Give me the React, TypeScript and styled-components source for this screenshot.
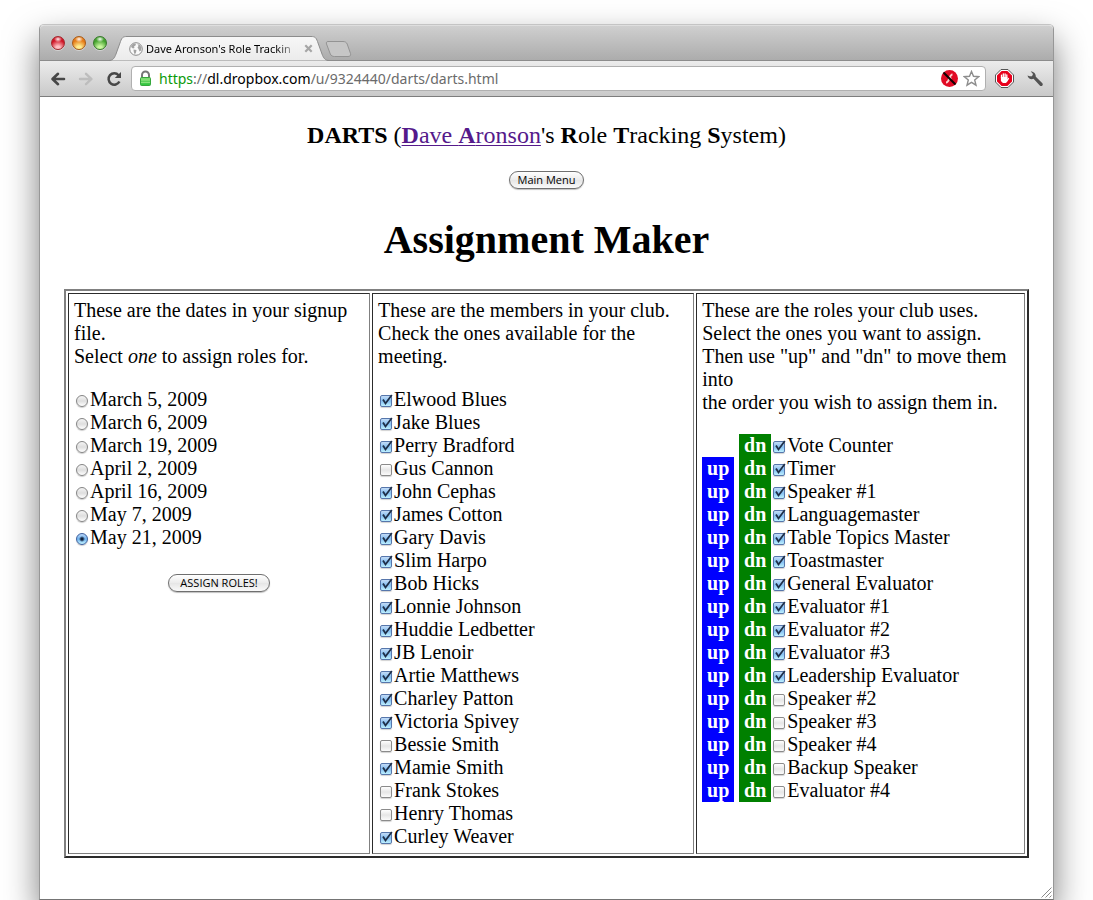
import React, { useState } from "react";
import styled, { createGlobalStyle } from "styled-components";

const GlobalStyle = createGlobalStyle`
  *, *::before, *::after { box-sizing: border-box; }
  body { margin: 0; background: #fff; }
`;

const uiFont = `"Open Sans", "Noto Sans", sans-serif`;
const chromeFont = `"Noto Sans", "Open Sans", sans-serif`;
const serif = `"Liberation Serif", "Times New Roman", serif`;

const Desktop = styled.div`
  min-height: 100vh;
  padding: 24px 39px 0;
  overflow: hidden;
`;

const Window = styled.div`
  display: flex;
  flex-direction: column;
  min-height: calc(100vh - 24px);
  border: 1px solid #979797;
  border-top-color: #c4c4c4;
  border-bottom-color: #747474;
  border-radius: 5px 5px 0 0;
  background: #fff;
  box-shadow: 0 16px 34px rgba(0, 0, 0, 0.52);
`;

const TabStrip = styled.header`
  display: flex;
  align-items: flex-end;
  height: 36px;
  padding-left: 11px;
  border-radius: 4px 4px 0 0;
  border-top: 1px solid #dedede;
  border-bottom: 1px solid #8c8c8c;
  background: linear-gradient(#cfcfcf, #acacac);
`;

const Lights = styled.div`
  display: flex;
  gap: 7px;
  padding-bottom: 10px;
`;

const Light = styled.button<{ $edge: string; $dark: string; $glow: string }>`
  width: 14px;
  height: 14px;
  padding: 0;
  border: 1px solid ${(p) => p.$edge};
  border-radius: 50%;
  background:
    radial-gradient(ellipse 4px 3px at 50% 18%, rgba(255, 255, 255, 0.95), rgba(255, 255, 255, 0)),
    radial-gradient(ellipse 8px 8px at 50% 92%, ${(p) => p.$glow} 25%, ${(p) => p.$dark});
  box-shadow: 0 1px 0 rgba(255, 255, 255, 0.4);
`;

const Tab = styled.div`
  position: relative;
  display: flex;
  align-items: center;
  width: 220px;
  height: 25px;
  margin: 0 -5px -1px 2px;
  padding: 0 16px 0 20px;
`;

const TabShape = styled.svg`
  position: absolute;
  inset: 0;
`;

const TabTitle = styled.span`
  position: relative;
  flex: 1;
  margin-left: 3px;
  white-space: nowrap;
  font: 11px/16px ${chromeFont};
  color: #000;
  mask-image: linear-gradient(90deg, #000 82%, transparent 98%);
`;

const Glyph = styled.svg`
  position: relative;
  display: block;
  flex: none;
`;

const BareButton = styled.button`
  position: relative;
  display: block;
  flex: none;
  padding: 0;
  border: 0;
  background: none;
`;

const Toolbar = styled.nav`
  display: flex;
  align-items: center;
  height: 36px;
  padding: 0 9px 0 10px;
  border-bottom: 1px solid #7d7d7d;
  background: linear-gradient(#ececec, #c9c9c9);
`;

const NavButtons = styled.div`
  display: flex;
  gap: 12px;
  margin-right: 9px;
`;

const AddressBar = styled.div`
  display: flex;
  flex: 1;
  align-items: center;
  height: 25px;
  padding: 0 5px 0 6px;
  border: 1px solid #b0b0b0;
  border-radius: 4px;
  background: #fff;
`;

const Url = styled.div`
  flex: 1;
  margin-left: 6px;
  font: 14px/20px ${chromeFont};
  color: #6b6b6b;
  white-space: nowrap;

  b { font-weight: 400; color: #000; }
  i { font-style: normal; color: #0a9a0a; }
`;

const BarIcons = styled.div`
  display: flex;
  align-items: center;
  gap: 5px;
`;

const ToolIcons = styled.div`
  display: flex;
  align-items: center;
  gap: 12px;
  margin-left: 9px;
`;

const Page = styled.main`
  flex: 1;
  padding: 24px 24px 0;
  font: 20px/23px ${serif};
  color: #000;
`;

const SiteTitle = styled.div`
  font-size: 24px;
  line-height: 28px;
  text-align: center;

  a { color: #551a8b; text-underline-offset: 2px; text-decoration-thickness: 1px; }
`;

const CenterRow = styled.div<{ $top: number }>`
  display: flex;
  justify-content: center;
  padding-top: ${(p) => p.$top}px;
`;

const AquaButton = styled.button<{ $wide?: boolean }>`
  height: 18px;
  padding: 0 ${(p) => (p.$wide ? 11 : 8)}px;
  border: 1px solid #6f6f6f;
  border-radius: 9px;
  background: linear-gradient(#fff, #ececec 48%, #e6e6e6 52%, #fafafa);
  box-shadow: 0 1px 1px rgba(0, 0, 0, 0.25);
  font: 11px/16px ${uiFont};
  color: #000;
  white-space: nowrap;
`;

const Heading = styled.h1`
  margin: 28px 0 26px;
  font-size: 40px;
  line-height: 46px;
  text-align: center;
`;

const Columns = styled.table`
  width: 100%;
  border-spacing: 2px;
  border: 2px solid;
  border-color: #808080 #2c2c2c #2c2c2c #808080;
`;

const Cell = styled.td<{ $width: string }>`
  width: ${(p) => p.$width};
  padding: 5px;
  border: 1px solid;
  border-color: #2c2c2c #808080 #808080 #2c2c2c;
  vertical-align: top;
`;

const Intro = styled.p`
  margin: 0 0 20px;
`;

const List = styled.div`
  display: flex;
  flex-direction: column;
`;

const Row = styled.div`
  display: flex;
  height: 23px;
`;

const Choice = styled.label`
  display: flex;
  align-items: center;
  white-space: nowrap;
`;

const Radio = styled.input`
  appearance: none;
  width: 12px;
  height: 12px;
  margin: 2px 2px 0;
  border: 1px solid #858585;
  border-radius: 50%;
  background: linear-gradient(#f4f4f4, #dedede 50%, #fff);
  box-shadow: 0 1px 1px rgba(0, 0, 0, 0.2);

  &:checked {
    border-color: #3d5f9e;
    background:
      radial-gradient(circle at 50% 50%, #10213c 1px, transparent 3px),
      linear-gradient(#b9d6f8, #6fb2ee 50%, #c4f4ff);
  }
`;

const BoxWrap = styled.span`
  position: relative;
  display: block;
  width: 12px;
  height: 12px;
  margin: 2px 2px 0;
`;

const Box = styled.input`
  appearance: none;
  display: block;
  width: 12px;
  height: 12px;
  margin: 0;
  border: 1px solid #8b8b8b;
  border-radius: 2px;
  background: linear-gradient(#fff, #e6e6e6 50%, #fbfbfb);
  box-shadow: 0 1px 1px rgba(0, 0, 0, 0.18);

  &:checked {
    border-color: #5676ab;
    background: linear-gradient(#c4dcf7, #84bff2 50%, #bdf0ff);
  }
  & + svg { display: none; }
  &:checked + svg { display: block; }
`;

const Tick = styled.svg`
  position: absolute;
  left: 0;
  top: -1px;
  pointer-events: none;
`;

const Mover = styled.button<{ $color: string; $hidden?: boolean }>`
  width: 32px;
  height: 23px;
  margin-right: ${(p) => (p.$color === "blue" ? 5 : 0)}px;
  padding: 0;
  border: 0;
  background: ${(p) => (p.$color === "blue" ? "#00f" : "#008000")};
  visibility: ${(p) => (p.$hidden ? "hidden" : "visible")};
  font: bold 20px/23px ${serif};
  color: #fff;
`;

const GripRow = styled.div`
  display: flex;
  justify-content: flex-end;
  padding: 0 1px 1px 0;
`;

const dates = [
  "March 5, 2009", "March 6, 2009", "March 19, 2009", "April 2, 2009",
  "April 16, 2009", "May 7, 2009", "May 21, 2009",
];

const members: [string, boolean][] = [
  ["Elwood Blues", true], ["Jake Blues", true], ["Perry Bradford", true],
  ["Gus Cannon", false], ["John Cephas", true], ["James Cotton", true],
  ["Gary Davis", true], ["Slim Harpo", true], ["Bob Hicks", true],
  ["Lonnie Johnson", true], ["Huddie Ledbetter", true], ["JB Lenoir", true],
  ["Artie Matthews", true], ["Charley Patton", true], ["Victoria Spivey", true],
  ["Bessie Smith", false], ["Mamie Smith", true], ["Frank Stokes", false],
  ["Henry Thomas", false], ["Curley Weaver", true],
];

const initialRoles: [string, boolean][] = [
  ["Vote Counter", true], ["Timer", true], ["Speaker #1", true],
  ["Languagemaster", true], ["Table Topics Master", true], ["Toastmaster", true],
  ["General Evaluator", true], ["Evaluator #1", true], ["Evaluator #2", true],
  ["Evaluator #3", true], ["Leadership Evaluator", true], ["Speaker #2", false],
  ["Speaker #3", false], ["Speaker #4", false], ["Backup Speaker", false],
  ["Evaluator #4", false],
];

function CheckChoice({ name, checked }: { name: string; checked: boolean }) {
  return (
    <Choice>
      <BoxWrap>
        <Box type="checkbox" defaultChecked={checked} />
        <Tick width="13" height="13" viewBox="0 0 13 13">
          <path d="M3 5.500 5.500 9.500 11.800 1" fill="none" stroke="#1f2f48" strokeWidth="1.800" />
        </Tick>
      </BoxWrap>
      {name}
    </Choice>
  );
}

function BrowserTab() {
  return (
    <Tab>
      <TabShape width="220" height="25" viewBox="0 0 220 25">
        <defs>
          <linearGradient id="tab" x1="0" y1="0" x2="0" y2="1">
            <stop offset="0" stopColor="#f7f7f7" />
            <stop offset="1" stopColor="#ebebeb" />
          </linearGradient>
        </defs>
        <path
          d="M0 24.5C4 24.5 5.500 22 7 18L11.500 5.500C13 1.500 14 .5 18 .5H202C206 .5 207 1.500 208.500 5.500L213 18C214.500 22 216 24.500 220 24.500"
          fill="url(#tab)"
          stroke="#8c8c8c"
        />
      </TabShape>
      <Glyph width="14" height="14" viewBox="0 0 14 14">
        <circle cx="7" cy="7" r="6.300" fill="#fafafa" stroke="#8a8a8a" />
        <path d="M2 4 4.500 1.500 7 1.800 6.500 3.500 5 4.500 5.500 6 4 6.500 2.500 5.500ZM4.500 7.500 7.500 8 7 10.500 5.800 12.500 4.800 10ZM8.500 2 11 3 12.500 5.500 12 8.500 10.500 9.500 9.500 7 8.500 5.500 9.500 4Z" fill="#a3a3a3" />
      </Glyph>
      <TabTitle>Dave Aronson's Role Trackin</TabTitle>
      <BareButton aria-label="Close tab">
        <Glyph width="9" height="9" viewBox="0 0 9 9">
          <path d="M1.300 1.300 7.700 7.700M7.700 1.300 1.300 7.700" stroke="#a6a6a6" strokeWidth="2.200" />
        </Glyph>
      </BareButton>
    </Tab>
  );
}

function BrowserBar() {
  return (
    <Toolbar>
      <NavButtons>
        <BareButton aria-label="Back">
          <Glyph width="16" height="16" viewBox="0 0 16 16">
            <path d="M14 8H3M8 2.800 2.500 8 8 13.200" fill="none" stroke="#474747" strokeWidth="2.600" strokeLinecap="round" strokeLinejoin="round" />
          </Glyph>
        </BareButton>
        <BareButton aria-label="Forward" disabled>
          <Glyph width="16" height="16" viewBox="0 0 16 16">
            <path d="M2 8H13M8 2.800 13.500 8 8 13.200" fill="none" stroke="#bdbdbd" strokeWidth="2.400" strokeLinecap="round" strokeLinejoin="round" />
          </Glyph>
        </BareButton>
        <BareButton aria-label="Reload">
          <Glyph width="16" height="16" viewBox="0 0 16 16">
            <path d="M12.600 4.200A5.700 5.700 0 1 0 13.400 10.500" fill="none" stroke="#474747" strokeWidth="2.500" />
            <path d="M15 1V7H8.800Z" fill="#474747" />
          </Glyph>
        </BareButton>
      </NavButtons>
      <AddressBar>
        <Glyph width="15" height="17" viewBox="0 0 15 17">
          <defs>
            <linearGradient id="lock" x1="0" y1="0" x2="0" y2="1">
              <stop offset="0" stopColor="#88df77" />
              <stop offset="1" stopColor="#28c33a" />
            </linearGradient>
          </defs>
          <path d="M4 8V5a3.500 3.500 0 0 1 7 0V8" fill="none" stroke="#777" strokeWidth="2" />
          <rect x="2.500" y="7.500" width="10" height="8" rx="1" fill="url(#lock)" stroke="#36a73c" />
          <path d="M3 10H12M3 12.500H12" stroke="#a3eb91" strokeWidth=".7" />
        </Glyph>
        <Url><i>https</i>://<b>dl.dropbox.com</b>/u/9324440/darts/darts.html</Url>
        <BarIcons>
          <Glyph width="17" height="17" viewBox="0 0 17 17">
            <circle cx="8.500" cy="8.500" r="8.500" fill="#e10a24" />
            <path d="M11.500 4.500C8 4.500 8.800 12.500 5 12.500M7 8.500H10.500" fill="none" stroke="#ffd0d0" strokeWidth="1.900" />
            <path d="M2.500 2.500 14.500 14.500" stroke="#140000" strokeWidth="2.100" />
          </Glyph>
          <BareButton aria-label="Bookmark this page">
            <Glyph width="17" height="17" viewBox="0 0 17 17">
              <path d="M8.500 1.500 10.500 6.300 15.700 6.700 11.700 10 13 15.200 8.500 12.400 4 15.200 5.300 10 1.300 6.700 6.500 6.300Z" fill="#fff" stroke="#8d8d8d" strokeWidth="1.400" />
            </Glyph>
          </BareButton>
        </BarIcons>
      </AddressBar>
      <ToolIcons>
        <BareButton aria-label="Ad blocker">
          <Glyph width="19" height="19" viewBox="0 0 19 19">
            <path d="M6 .5H13L18.500 6V13L13 18.500H6L.5 13V6Z" fill="#fff" stroke="#555" />
            <path d="M6.600 2H12.400L17 6.600V12.400L12.400 17H6.600L2 12.400V6.600Z" fill="#e8001c" />
            <path d="M6.500 9V6.200M8.300 9V5M10.100 9V4.800M11.800 9V5.800" stroke="#fff" strokeWidth="1.300" strokeLinecap="round" />
            <path d="M5.900 8H12.400V10L13.600 8.800 14.200 9.600 12 13 10.800 14H7.900L5.900 12Z" fill="#fff" />
          </Glyph>
        </BareButton>
        <BareButton aria-label="Settings">
          <Glyph width="18" height="18" viewBox="0 0 18 18">
            <path d="M1.500 5.500C2 8.500 5 9.800 7.500 8.800L13.800 15.600C15.300 17.100 17.800 14.900 16.400 13.200L9.800 6.800C10 4 8 1.500 4.800 1.500L7 4 6 6.200 3.700 6.300Z" fill="#535353" />
          </Glyph>
        </BareButton>
      </ToolIcons>
    </Toolbar>
  );
}

export default function App() {
  const [roles, setRoles] = useState(initialRoles);

  const move = (from: number, to: number) => {
    if (to < 0 || to >= roles.length) return;
    const next = [...roles];
    const [item] = next.splice(from, 1);
    next.splice(to, 0, item);
    setRoles(next);
  };

  return (
    <>
      <GlobalStyle />
      <Desktop>
        <Window>
          <TabStrip>
            <Lights>
              <Light aria-label="Close" $edge="#a3262b" $dark="#d01526" $glow="#ffc0c4" />
              <Light aria-label="Minimize" $edge="#a85a16" $dark="#e67c18" $glow="#ffee90" />
              <Light aria-label="Zoom" $edge="#37782a" $dark="#45a32f" $glow="#c9f79e" />
            </Lights>
            <BrowserTab />
            <BareButton aria-label="New tab">
              <Glyph width="28" height="20" viewBox="0 0 28 20">
                <path d="M4 1.500H19C21 1.500 22.500 2.300 23.200 4L26.500 13.500C27 15.500 26 16.500 24 16.500H10.500C8.500 16.500 7 15.700 6.300 14L2.500 4C2 2.500 2.500 1.500 4 1.500Z" fill="#c6c6c6" stroke="#939393" />
              </Glyph>
            </BareButton>
          </TabStrip>
          <BrowserBar />
          <Page>
            <SiteTitle>
              <b>DARTS</b> (<a href="#dave"><b>D</b>ave <b>A</b>ronson</a>'s <b>R</b>ole <b>T</b>racking <b>S</b>ystem)
            </SiteTitle>
            <CenterRow $top={22}>
              <AquaButton>Main Menu</AquaButton>
            </CenterRow>
            <Heading>Assignment Maker</Heading>
            <Columns>
              <tbody>
                <tr>
                  <Cell $width="31.700%">
                    <Intro>
                      These are the dates in your signup file.<br />
                      Select <em>one</em> to assign roles for.
                    </Intro>
                    <List>
                      {dates.map((d) => (
                        <Row key={d}>
                          <Choice>
                            <Radio type="radio" name="date" defaultChecked={d === "May 21, 2009"} />
                            {d}
                          </Choice>
                        </Row>
                      ))}
                    </List>
                    <CenterRow $top={25}>
                      <AquaButton $wide>ASSIGN ROLES!</AquaButton>
                    </CenterRow>
                  </Cell>
                  <Cell $width="33.800%">
                    <Intro>
                      These are the members in your club.<br />
                      Check the ones available for the meeting.
                    </Intro>
                    <List>
                      {members.map(([name, on]) => (
                        <Row key={name}><CheckChoice name={name} checked={on} /></Row>
                      ))}
                    </List>
                  </Cell>
                  <Cell $width="34.500%">
                    <Intro>
                      These are the roles your club uses.<br />
                      Select the ones you want to assign.<br />
                      Then use "up" and "dn" to move them into<br />
                      the order you wish to assign them in.
                    </Intro>
                    <List>
                      {roles.map(([name, on], i) => (
                        <Row key={name}>
                          <Mover $color="blue" $hidden={i === 0} onClick={() => move(i, i - 1)}>up</Mover>
                          <Mover $color="green" onClick={() => move(i, i + 1)}>dn</Mover>
                          <CheckChoice name={name} checked={on} />
                        </Row>
                      ))}
                    </List>
                  </Cell>
                </tr>
              </tbody>
            </Columns>
          </Page>
          <GripRow>
            <Glyph width="11" height="11" viewBox="0 0 11 11">
              <path d="M.5 10.500 10.500.5M4.500 10.500 10.500 4.500M8.500 10.500 10.500 8.500" stroke="#8a8a8a" />
            </Glyph>
          </GripRow>
        </Window>
      </Desktop>
    </>
  );
}
